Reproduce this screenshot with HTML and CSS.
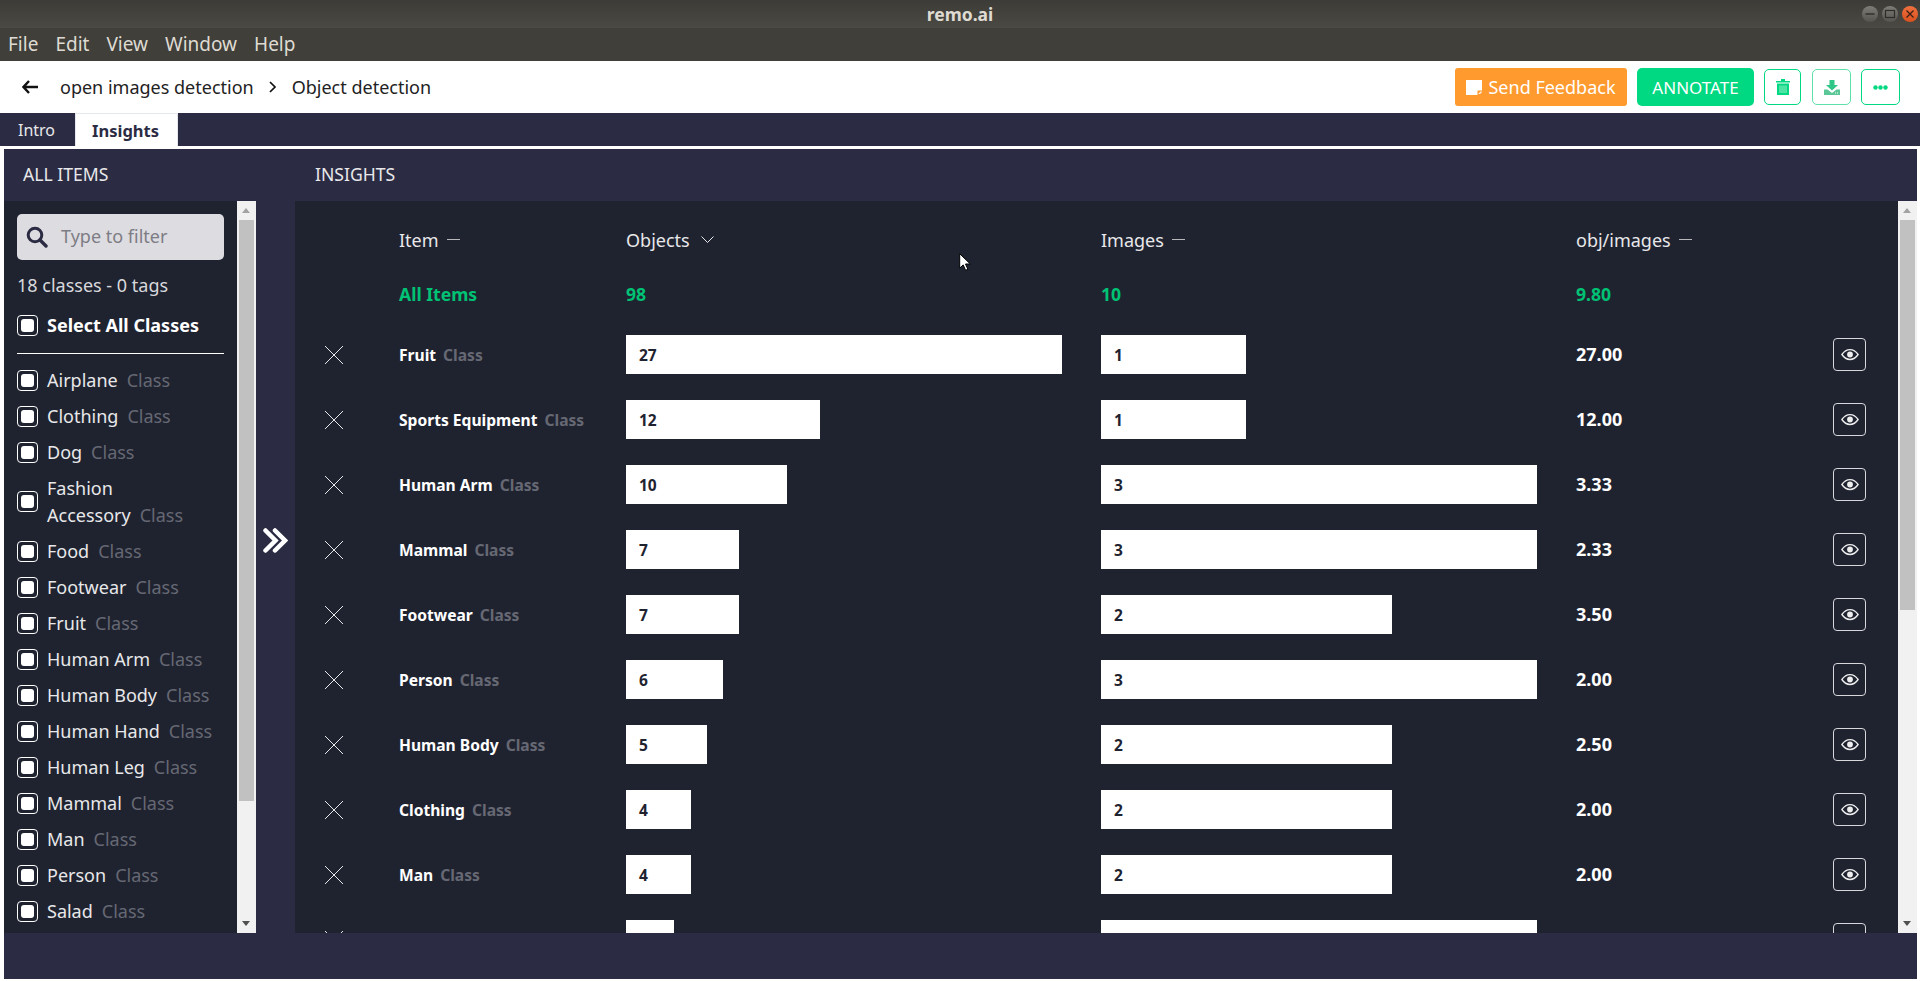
FILE: index.html
```html
<!DOCTYPE html>
<html lang="en">
<head>
    <meta charset="UTF-8">
    <meta name="viewport" content="width=device-width, initial-scale=1.0">
    <title>remo.ai</title>
    <link rel="stylesheet" href="styles.css">
</head>
<body>

    <div class="titlebar">
        <span class="app-title">remo.ai</span>
        <div class="win-controls">
            <span class="win-btn"><svg viewBox="0 0 16 16" width="16" height="16"><path d="M3.5 8h9" stroke="#2e2d29" stroke-width="1.4"/></svg></span>
            <span class="win-btn"><svg viewBox="0 0 16 16" width="16" height="16"><rect x="3.5" y="4.5" width="9" height="7" fill="none" stroke="#2e2d29" stroke-width="1.2"/></svg></span>
            <span class="win-btn win-close"><svg viewBox="0 0 16 16" width="16" height="16"><path d="M4.5 4.5l7 7M11.5 4.5l-7 7" stroke="#3a2016" stroke-width="1.3"/></svg></span>
        </div>
    </div>
    <div class="menubar">
        <span>File</span><span>Edit</span><span>View</span><span>Window</span><span>Help</span>
    </div>

    <div class="topbar">
        <svg class="back-icon" viewBox="0 0 16 14" width="16" height="14"><path d="M7 1L1.5 7 7 13M2 7h14" fill="none" stroke="#111" stroke-width="2.4"/></svg>
        <span class="crumb">open images detection</span>
        <svg class="crumb-sep" viewBox="0 0 8 12" width="8" height="12"><path d="M1 1l5 5-5 5" fill="none" stroke="#111" stroke-width="1.7"/></svg>
        <span class="crumb">Object detection</span>
        <div class="actions">
            <button class="btn-feedback">
                <svg viewBox="0 0 16 16" width="16" height="16"><path d="M0 1h16v10l-5 5H0z" fill="#fff"/><path d="M11.5 15.5v-4h4z" fill="#ff9a2e"/><path d="M12.5 15l3-3v1.500l-1.500 1.500z" fill="#fff"/></svg>
                Send Feedback
            </button>
            <button class="btn-annotate">ANNOTATE</button>
            <button class="btn-icon btn-trash">
                <svg viewBox="0 0 14 16" width="14" height="16"><path d="M0 2h5V0h4v2h5v1.600H0zM1 4.500h12V16H1z" fill="#00d882"/><path d="M4 6.500V14M6 6.500V14M8 6.500V14M10 6.500V14" stroke="#9af0c8" stroke-width="1"/></svg>
            </button>
            <button class="btn-icon btn-download">
                <svg viewBox="0 0 16 15" width="16" height="15"><path d="M5.500 0h5v5H14l-6 5.500L2 5h3.500z" fill="#2fc688"/><path d="M0 9.500h3.500L8 13l4.500-3.500H16V15H0z" fill="#5cc796"/><path d="M11 13h1M13 13h1" stroke="#fff"/></svg>
            </button>
            <button class="btn-icon btn-more">
                <svg viewBox="0 0 15 5" width="15" height="5"><circle cx="2.500" cy="2.500" r="2.200" fill="#00d882"/><circle cx="7.500" cy="2.500" r="2.200" fill="#00d882"/><circle cx="12.500" cy="2.500" r="2.200" fill="#00d882"/></svg>
            </button>
        </div>
    </div>

    <div class="tabs">
        <span class="tab">Intro</span>
        <span class="tab tab-active">Insights</span>
    </div>

    <div class="workspace">
        <div class="section-heads">
            <span class="head-items">ALL ITEMS</span>
            <span class="head-insights">INSIGHTS</span>
        </div>

        <div class="panels">
            <div class="sidebar">
                <div class="search">
                    <svg viewBox="0 0 22 22" width="22" height="22"><circle cx="9" cy="9" r="6.800" fill="none" stroke="#2b2c43" stroke-width="3"/><path d="M14 14l6 6" stroke="#2b2c43" stroke-width="3.400" stroke-linecap="round"/></svg>
                    <span class="search-text">Type to filter</span>
                </div>
                <div class="counts">18 classes - 0 tags</div>
                <div class="select-all"><span class="check"></span>Select All Classes</div>
                <div class="class-list" id="classList"></div>
            </div>
            <div class="scrollbar">
                <span class="arrow-up"></span>
                <div class="thumb thumb-side"></div>
                <span class="arrow-down"></span>
            </div>

            <div class="collapse-col">
                <svg viewBox="0 0 25 25" width="25" height="25"><path d="M2.500 2.500l10 10-10 10M12 2.500l10 10-10 10" fill="none" stroke="#fff" stroke-width="4.500" stroke-linecap="round"/></svg>
            </div>

            <div class="insights">
                <div class="table-head">
                    <span></span>
                    <span class="col-title">Item <i class="dash"></i></span>
                    <span class="col-title">Objects
                        <svg class="sort-icon" viewBox="0 0 13 7" width="13" height="7"><path d="M.5 .5l6 6 6-6" fill="none" stroke="#e8e8ea" stroke-width="1"/></svg>
                    </span>
                    <span class="col-title">Images <i class="dash"></i></span>
                    <span class="col-title">obj/images <i class="dash"></i></span>
                </div>
                <div class="all-row">
                    <span></span>
                    <span class="all-name">All Items</span>
                    <span>98</span>
                    <span>10</span>
                    <span>9.80</span>
                </div>
                <div id="rows"></div>
            </div>
            <div class="scrollbar">
                <span class="arrow-up"></span>
                <div class="thumb thumb-main"></div>
                <span class="arrow-down"></span>
            </div>
        </div>

        <div class="footer"></div>
    </div>

    <svg class="mouse-pointer" viewBox="0 0 12 18" width="12" height="18"><path d="M.7 .7v14.500l3.500-3.300 2.400 5.400 2.300-1-2.400-5.300h4.800z" fill="#fff" stroke="#000" stroke-width="1"/></svg>

    <script>
        // list on the left
        const classes = ["Airplane", "Clothing", "Dog", "Fashion Accessory", "Food", "Footwear", "Fruit", "Human Arm",
            "Human Body", "Human Hand", "Human Leg", "Mammal", "Man", "Person", "Salad"];

        document.getElementById("classList").innerHTML = classes.map(name => {
            return `<div class="class-item"><span class="check"></span><span class="class-label">${name}<em>Class</em></span></div>`;
        }).join("");

        // insight rows: name, objects, images
        const insights = [
            ["Fruit", 27, 1], ["Sports Equipment", 12, 1], ["Human Arm", 10, 3], ["Mammal", 7, 3], ["Footwear", 7, 2],
            ["Person", 6, 3], ["Human Body", 5, 2], ["Clothing", 4, 2], ["Man", 4, 2], ["Dog", 3, 3]
        ];
        const maxObjects = 27;
        const maxImages = 3;

        document.getElementById("rows").innerHTML = insights.map(row => {
            let objWidth = row[1] / maxObjects * 100;
            let imgWidth = row[2] / maxImages * 100;
            return `<div class="row">
                <svg viewBox="0 0 20 20" width="20" height="20"><path d="M1 1l18 18M19 1L1 19" stroke="#e8e8ea" stroke-width="1"/></svg>
                <span class="row-name">${row[0]}<em>Class</em></span>
                <div class="bar-cell"><div class="bar" style="width:${objWidth}%">${row[1]}</div></div>
                <div class="bar-cell"><div class="bar" style="width:${imgWidth}%">${row[2]}</div></div>
                <span class="ratio">${(row[1] / row[2]).toFixed(2)}</span>
                <button class="eye-btn"><svg viewBox="0 0 20 14" width="18" height="13"><path d="M1 7c2.500-3.700 5.500-5.500 9-5.500s6.500 1.800 9 5.500c-2.500 3.700-5.500 5.500-9 5.500S3.500 10.700 1 7z" fill="none" stroke="#eee" stroke-width="1.500"/><circle cx="10" cy="7" r="3.200" fill="#eee"/></svg></button>
            </div>`;
        }).join("");
    </script>

</body>
</html>
```

FILE: styles.css
```css
* { box-sizing: border-box; }
html, body { margin: 0; height: 100%; }
body { font-family: "Noto Sans", "Open Sans", sans-serif; background: #fff; overflow: hidden; color: #111; }
button { font-family: inherit; cursor: pointer; padding: 0; }
em { font-style: normal; }

.titlebar { height: 28px; background: linear-gradient(#3c3b37, #4a4943); display: flex; align-items: center; justify-content: center; position: relative; }
.app-title { font-size: 17.500px; font-weight: 700; color: #dfdbd2; }
.win-controls { position: absolute; right: 2px; top: 6px; display: flex; gap: 4px; }
.win-btn { width: 16px; height: 16px; border-radius: 50%; background: linear-gradient(#7d7c76, #55544f); display: flex; }
.win-close { background: linear-gradient(#f0703f, #d9501e); }

.menubar { height: 33px; background: #403f3a; display: flex; align-items: center; padding: 0 0 2px 8px; gap: 17px; font-size: 19px; color: #dfdbd2; }

.topbar { height: 52px; display: flex; align-items: center; padding: 0 20px 0 22px; font-size: 18px; color: #222; }
.crumb { padding-bottom: 1px; }
.back-icon { margin-right: 22px; }
.crumb-sep { margin: 0 15px; }
.actions { margin-left: auto; display: flex; align-items: center; gap: 10px; }
.btn-feedback { width: 172px; height: 38px; border: none; border-radius: 3px; background: #ff9a2e; color: #fff; font-size: 18px; display: flex; align-items: center; justify-content: center; gap: 6px; padding-bottom: 1px; }
.btn-annotate { width: 117px; height: 38px; border: none; border-radius: 5px; background: #00d882; color: #fff; font-size: 17px; }
.btn-icon { width: 39px; height: 36px; background: #fff; border: 1px solid #00d882; border-radius: 5px; display: flex; align-items: center; justify-content: center; }
.btn-trash { width: 37px; }
.btn-download { border-color: #5fe0aa; margin-left: 1px; }

.tabs { height: 33px; background: #2b2c43; display: flex; }
.tab { display: flex; align-items: center; justify-content: center; width: 75px; font-size: 16px; color: #e8e8ea; padding-right: 2px; }
.tab-active { width: 103px; background: #fff; color: #2b2c43; font-size: 16.500px; font-weight: 700; border: 1px solid #e4e7ee; border-bottom: none; }

.workspace { margin: 3px 3px 0 4px; height: 830px; display: flex; flex-direction: column; background: #2b2c43; }
.section-heads { height: 52px; display: flex; align-items: center; padding-bottom: 3px; font-size: 17.600px; color: #e8e8ea; }
.head-items { width: 311px; padding-left: 19px; }
.panels { height: 732px; display: flex; overflow: hidden; }
.footer { flex: 1; }

.sidebar { width: 233px; background: #1f2330; padding: 13px 13px 0; overflow: hidden; color: #fff; }
.search { height: 46px; border-radius: 5px; background: #dddce1; display: flex; align-items: center; gap: 13px; padding-left: 9px; font-size: 18px; color: #7d7d85; }
.search-text { padding-bottom: 2px; }
.counts { margin-top: 14px; font-size: 18px; color: #d8d8dc; line-height: 22px; }
.select-all { margin-top: 15px; height: 28px; display: flex; align-items: center; gap: 9px; font-size: 18px; font-weight: 700; }
.class-list { margin-top: 14px; border-top: 1px solid #fff; padding-top: 8px; }
.class-item { min-height: 36px; display: flex; align-items: center; gap: 9px; padding: 4.500px 0; }
.class-label { font-size: 18px; line-height: 27px; color: #e8e8ea; }
.class-label em { margin-left: 9px; color: #666873; }
.check { flex: none; width: 21px; height: 21px; border: 1px solid #fff; border-radius: 4px; position: relative; }
.check::after { content: ""; position: absolute; inset: 3px; background: #fff; border-radius: 3px; }

.scrollbar { width: 19px; flex: none; background: #f1f1f1; display: flex; flex-direction: column; align-items: center; padding: 0 2px; position: relative; }
.thumb { width: 15px; background: #c1c1c1; margin-top: 19px; }
.thumb-side { height: 581px; }
.thumb-main { height: 390px; }
.arrow-up, .arrow-down { position: absolute; left: 5px; width: 0; height: 0; border-left: 4.500px solid transparent; border-right: 4.500px solid transparent; }
.arrow-up { top: 7px; border-bottom: 5px solid #a3a3a3; }
.arrow-down { bottom: 7px; border-top: 5px solid #505050; }

.collapse-col { width: 39px; flex: none; display: flex; align-items: center; justify-content: center; padding-bottom: 54px; }

.insights { flex: 1; background: #1f2330; overflow: hidden; }
.table-head, .all-row, .row { display: grid; grid-template-columns: 104px 227px 475px 475px 257px 33px; align-items: center; }
.table-head { height: 78px; padding-bottom: 1px; font-size: 18px; color: #e8e8ea; }
.col-title { display: flex; align-items: center; gap: 8px; }
.sort-icon { margin-left: 3px; }
.dash { width: 13px; height: 1px; background: #b8b8bc; }
.all-row { height: 30px; margin-bottom: 13px; font-size: 17.600px; font-weight: 700; color: #00c274; }
.row { height: 65px; color: #fff; }
.row > svg { margin-left: 29px; }
.row-name { font-size: 15.600px; font-weight: 700; }
.row-name em { margin-left: 7px; color: #666873; }
.bar-cell { width: 436px; }
.bar { height: 39px; background: #fff; color: #1f2330; font-size: 15.500px; font-weight: 700; display: flex; align-items: center; padding-left: 13px; }
.ratio { font-size: 18px; font-weight: 700; padding-bottom: 2px; }
.eye-btn { width: 33px; height: 33px; background: none; border: 1px solid #d8d8dc; border-radius: 4px; display: flex; align-items: center; justify-content: center; }

.mouse-pointer { position: absolute; left: 959px; top: 253px; }
```
